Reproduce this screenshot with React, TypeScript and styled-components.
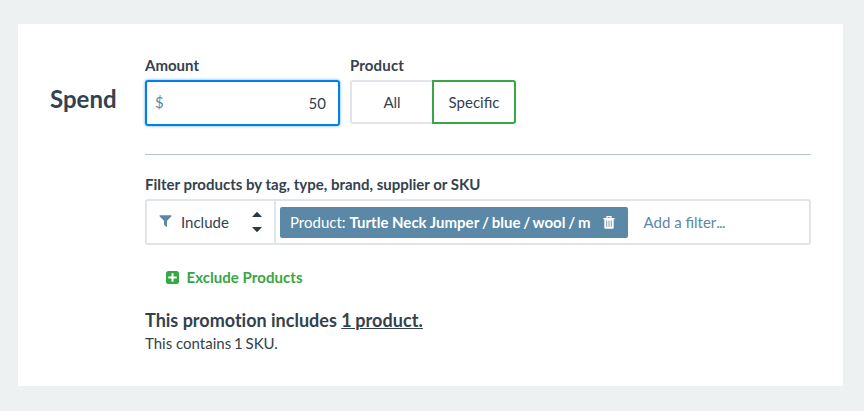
import React from "react";
import styled, { createGlobalStyle } from "styled-components";

const GlobalStyle = createGlobalStyle`
  * { box-sizing: border-box; }
  body { margin: 0; background: #edf1f2; font-family: Lato, "Liberation Sans", sans-serif; color: #33424d; font-size: 15px; line-height: 20px; text-rendering: optimizeLegibility; -webkit-font-smoothing: antialiased; }
  button, input { font: inherit; color: inherit; margin: 0; }
`;
const Page = styled.div`
  padding: 24px 21px 25px 18px;
  height: 411px;
`;
const Card = styled.section`
  display: flex;
  height: 362px;
  background: #fff;
  padding: 31px 32px 0;
`;
const Title = styled.h2`
  margin: 28px 0 0;
  width: 95px;
  font-size: 24px;
  line-height: 32px;
  font-weight: 700;
`;
const Body = styled.div`
  flex: 1;
  min-width: 0;
`;
const Row = styled.div`
  display: flex;
  gap: 10px;
  height: 100px;
  border-bottom: 1px solid #b7c3ca;
`;
const Label = styled.div`
  font-weight: 700;
  height: 25px;
  line-height: 20px;
`;
const ProductLabel = styled(Label)`letter-spacing: 0.15px;`;
const AmountBox = styled.div`
  display: flex;
  align-items: center;
  width: 195px;
  height: 46px;
  border: 2px solid #0080e8;
  border-radius: 3px;
  padding: 0 12px 0 8px;
  box-shadow: 0 0 3px #0080e8aa;
`;
const Currency = styled.span`
  color: #5b88a6;
  padding-bottom: 2px;
`;
const AmountInput = styled.input`
  flex: 1;
  min-width: 0;
  border: 0;
  outline: 0;
  padding: 0;
  text-align: right;
  background: none;
`;
const Segments = styled.div`display: flex;`;
const Segment = styled.button<{ $active?: boolean }>`
  width: ${p => (p.$active ? 84 : 82)}px;
  height: 44px;
  padding: 0;
  background: #fff;
  border: 2px solid ${p => (p.$active ? "#37a644" : "#dfe5e9")};
  border-right-width: ${p => (p.$active ? 2 : 0)}px;
  border-radius: ${p => (p.$active ? "0 3px 3px 0" : "3px 0 0 3px")};
`;
const FilterLabel = styled(Label)`margin-top: 19px;`;
const FilterBar = styled.div`
  display: flex;
  align-items: center;
  height: 46px;
  border: 2px solid #dfe5e9;
  border-radius: 3px;
`;
const Mode = styled.div`
  display: flex;
  align-items: center;
  width: 129px;
  height: 42px;
  border-right: 2px solid #dfe5e9;
  padding: 0 12px 0 12px;
`;
const ModeName = styled.span`
  flex: 1;
  margin-left: 9px;
`;
const Tag = styled.div`
  display: flex;
  align-items: center;
  height: 31px;
  width: 348px;
  margin-left: 4px;
  padding: 0 13px 0 10px;
  background: #5b88a6;
  color: #fff;
  border-radius: 2px;
  white-space: pre;
`;
const Options = styled.span`word-spacing: -0.9px;`;
const TrashIcon = styled.svg`margin-left: auto;`;
const FunnelIcon = styled.svg`margin-bottom: 2px;`;
const AddFilter = styled.span`
  margin-left: 15.5px;
  color: #5b88a6;
`;
const Ellipsis = styled.span`letter-spacing: -0.7px;`;
const Exclude = styled.div`
  display: flex;
  align-items: center;
  gap: 7.5px;
  margin: 22px 0 0 21px;
  height: 20px;
  color: #37a644;
  font-weight: 700;
  letter-spacing: 0.05px;
`;
const PlusIcon = styled.svg`
  position: relative;
  top: 0.5px;
`;
const Summary = styled.div`
  margin-top: 21px;
  font-size: 18px;
  line-height: 24px;
  font-weight: 700;
  font-variant-ligatures: no-common-ligatures;
`;
const Underlined = styled.span`
  text-decoration: underline;
  word-spacing: -0.8px;
  letter-spacing: 0.06px;
`;
const Note = styled.div`
  line-height: 20px;
  margin-top: 1px;
`;
const Count = styled.span`word-spacing: -1px;`;

export default function App() {
  return (
    <>
      <GlobalStyle />
      <Page>
        <Card>
          <Title>Spend</Title>
          <Body>
            <Row>
              <div>
                <Label>Amount</Label>
                <AmountBox>
                  <Currency>$</Currency>
                  <AmountInput defaultValue="50" aria-label="Amount" />
                </AmountBox>
              </div>
              <div>
                <ProductLabel>Product</ProductLabel>
                <Segments>
                  <Segment>All</Segment>
                  <Segment $active>Specific</Segment>
                </Segments>
              </div>
            </Row>
            <FilterLabel>Filter products by tag, type, brand, supplier or SKU</FilterLabel>
            <FilterBar>
              <Mode>
                <FunnelIcon width="13" height="14" viewBox="0 0 13 14">
                  <path d="M.8 1.300h11.400q.6.500.1 1.100L8 6.800V12.600q-.2.600-.8.200L5 10.800V6.800L.7 2.400Q.2 1.800.8 1.300z" fill="#5b88a6" />
                </FunnelIcon>
                <ModeName>Include</ModeName>
                <svg width="10" height="22" viewBox="0 0 10 22">
                  <path d="M0 6l4.500-4.700q.5-.4 1 0L10 6zM0 16h10l-4.500 4.700q-.5.400-1 0z" fill="#2b3943" />
                </svg>
              </Mode>
              <Tag>
                Product: <b>Turtle Neck Jumper<Options> / blue / wool / m</Options></b>
                <TrashIcon width="12" height="13" viewBox="0 0 12 13" fill="none">
                  <path d="M4 2V.7h4V2M.3 2.600h11.400" stroke="#fff" strokeWidth="1.300" />
                  <path d="M1.300 3h9.400v8.700q0 1-1 1H2.300q-1 0-1-1z" fill="#fff" />
                  <path d="M3.700 4.500v6.300M6 4.500v6.300M8.300 4.500v6.300" stroke="#5b88a6" strokeWidth=".8" />
                </TrashIcon>
              </Tag>
              <AddFilter>Add a filter<Ellipsis>...</Ellipsis></AddFilter>
            </FilterBar>
            <Exclude>
              <PlusIcon width="13" height="13" viewBox="0 0 13 13">
                <rect width="13" height="13" rx="2.500" fill="#37a644" />
                <path d="M6.500 2.300v8.400M2.300 6.500h8.400" stroke="#fff" strokeWidth="2" />
              </PlusIcon>
              Exclude Products
            </Exclude>
            <Summary>This promotion includes <Underlined>1 product.</Underlined></Summary>
            <Note>This contains<Count> 1 SKU.</Count></Note>
          </Body>
        </Card>
      </Page>
    </>
  );
}
